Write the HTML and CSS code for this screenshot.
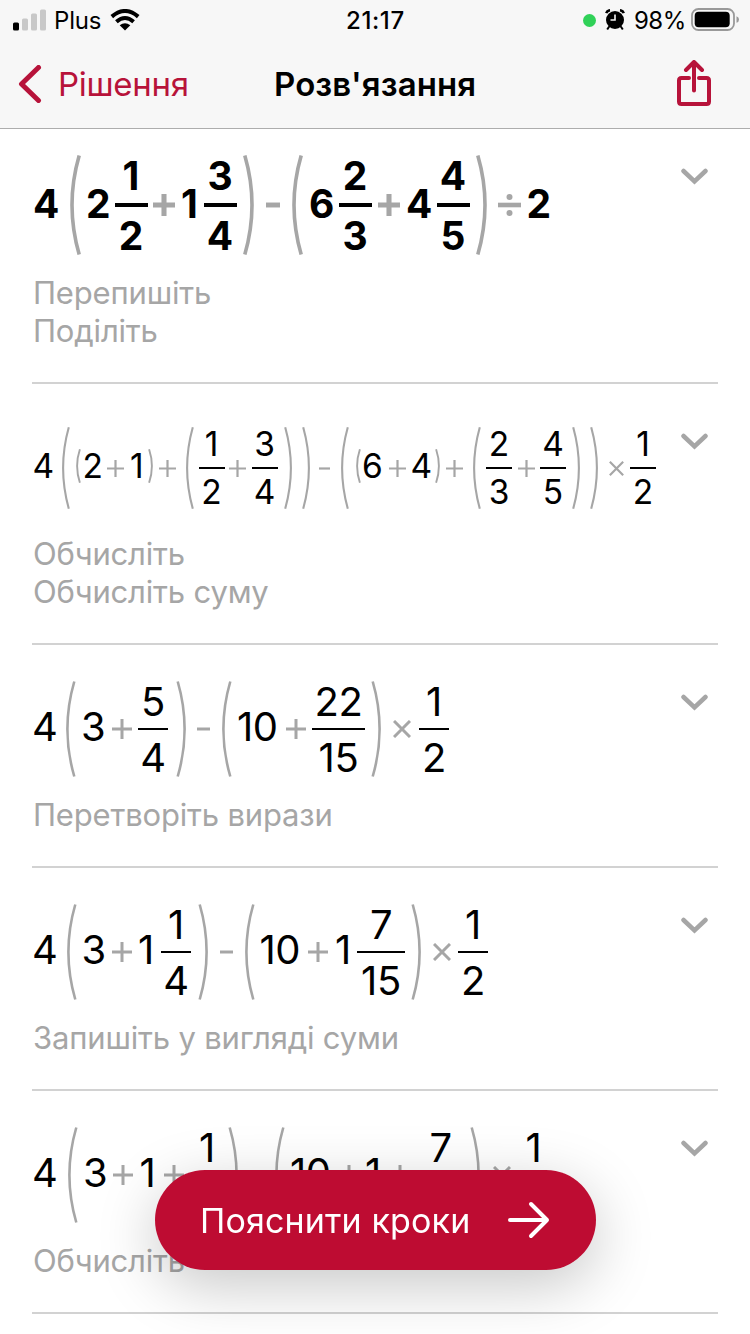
FILE: index.html
```html
<!DOCTYPE html>
<html lang="uk">
<head>
<meta charset="utf-8">
<title>Розв'язання</title>
<link rel="stylesheet" href="styles.css">
</head>
<body>
<svg class="defs" width="0" height="0">
  <symbol id="p-bold" viewBox="0 0 11 100"><path d="M9.2 .5Q-5.2 50 9.2 99.500" stroke-width="3.6"/></symbol>
  <symbol id="p-mid" viewBox="0 0 10 96"><path d="M8.300 .5Q-5.500 48 8.300 95.500" stroke-width="2.600"/></symbol>
  <symbol id="p-small" viewBox="0 0 8 82"><path d="M6.800 .3Q-4.600 41 6.800 81.700" stroke-width="2.100"/></symbol>
  <symbol id="p-tiny" viewBox="0 0 5 34"><path d="M3.900 .3Q-1.700 17 3.900 33.700" stroke-width="1.900"/></symbol>
  <symbol id="plus" viewBox="0 0 20 20"><path d="M0 10H20M10 0V20"/></symbol>
  <symbol id="minus" viewBox="0 0 13 20"><path d="M0 10H13"/></symbol>
  <symbol id="times" viewBox="0 0 18 18"><path d="M1 1L17 17M17 1L1 17"/></symbol>
  <symbol id="divide" viewBox="0 0 23 22"><path d="M0 11H23"/><circle cx="11.500" cy="3" r="3" fill="#a6a6a6" stroke="none"/><circle cx="11.500" cy="19" r="3" fill="#a6a6a6" stroke="none"/></symbol>
  <symbol id="chevron" viewBox="0 0 28 18"><path d="M3.500 4L14.500 14.500L25.500 4"/></symbol>
</svg>

<header class="header">
  <div class="status">
    <div class="status-left">
      <svg width="34" height="22" viewBox="0 0 34 22"><rect x="0" y="13.500" width="6" height="8" rx="1.500"/><g fill="#c8c8c8"><rect x="9" y="9.500" width="6" height="12" rx="1.500"/><rect x="18" y="4.500" width="6" height="17" rx="1.500"/><rect x="27" y=".5" width="6" height="21" rx="1.500"/></g></svg>
      <span class="carrier">Plus</span>
      <svg class="wifi" width="30" height="22" viewBox="0 0 30 22"><g fill="none" stroke="#000" stroke-width="4"><path d="M1.800 7.600Q15-3.600 28.200 7.600"/><path d="M6.400 12.700Q15 5.300 23.600 12.700"/></g><path d="M15 21.500L9.700 16.300Q15 12 20.300 16.300Z"/></svg>
    </div>
    <span class="time">21:17</span>
    <div class="status-right">
      <span class="dot"></span>
      <svg class="alarm" width="20" height="22" viewBox="0 0 20 22"><circle cx="10" cy="11" r="9"/><path d="M1.200 4.200Q2 1.600 5 1.200M18.800 4.200Q18 1.600 15 1.200" fill="none" stroke="#000" stroke-width="2.600"/><path d="M4.200 17.500L2.200 20.500M15.800 17.500L17.800 20.500" stroke="#000" stroke-width="2"/><path d="M10 5.500V11H5.500" fill="none" stroke="#f7f7f7" stroke-width="1.600"/></svg>
      <span class="percent">98%</span>
      <svg class="battery" width="48" height="24" viewBox="0 0 48 24"><rect x="1" y="1" width="42" height="21" rx="6.500" fill="none" stroke="#999" stroke-width="1.800"/><rect x="3.700" y="3.700" width="35" height="15.600" rx="4"/><path d="M45.500 8.200Q48 9 48 11.500T45.500 14.800Z" fill="#999"/></svg>
    </div>
  </div>
  <nav class="nav">
    <a class="back"><svg width="24" height="38" viewBox="0 0 24 38"><path d="M20.500 2.500L3.500 19L20.500 35.500"/></svg><span>Рішення</span></a>
    <h1 class="title">Розв'язання</h1>
    <svg class="share" width="34" height="48" viewBox="0 0 34 48"><path d="M12 18H4.500Q2 18 2 20.500V41.500Q2 44 4.500 44H29.500Q32 44 32 41.500V20.500Q32 18 29.500 18H22"/><path d="M17 30.500V2.500M9 10L17 2L25 10"/></svg>
  </nav>
</header>

<main>
  <section class="step step-first">
    <div class="expr e1">
      <b>4</b><svg class="p"><use href="#p-bold"/></svg><b>2</b><span class="frac"><i>1</i><i>2</i></span><svg class="plus"><use href="#plus"/></svg><b>1</b><span class="frac"><i>3</i><i>4</i></span><svg class="p r"><use href="#p-bold"/></svg><svg class="minus"><use href="#minus"/></svg><svg class="p"><use href="#p-bold"/></svg><b>6</b><span class="frac"><i>2</i><i>3</i></span><svg class="plus"><use href="#plus"/></svg><b>4</b><span class="frac"><i>4</i><i>5</i></span><svg class="p r"><use href="#p-bold"/></svg><svg class="divide"><use href="#divide"/></svg><b>2</b>
    </div>
    <p class="label">Перепишіть<br>Поділіть</p>
    <svg class="chevron"><use href="#chevron"/></svg>
  </section>

  <section class="step step-two-line">
    <div class="expr e2">
      <b>4</b><svg class="p"><use href="#p-small"/></svg><svg class="p tiny"><use href="#p-tiny"/></svg><b>2</b><svg class="plus"><use href="#plus"/></svg><b>1</b><svg class="p tiny r"><use href="#p-tiny"/></svg><svg class="plus"><use href="#plus"/></svg><svg class="p"><use href="#p-small"/></svg><span class="frac"><i>1</i><i>2</i></span><svg class="plus"><use href="#plus"/></svg><span class="frac"><i>3</i><i>4</i></span><svg class="p r"><use href="#p-small"/></svg><svg class="p r"><use href="#p-small"/></svg><svg class="minus"><use href="#minus"/></svg><svg class="p"><use href="#p-small"/></svg><svg class="p tiny"><use href="#p-tiny"/></svg><b>6</b><svg class="plus"><use href="#plus"/></svg><b>4</b><svg class="p tiny r"><use href="#p-tiny"/></svg><svg class="plus"><use href="#plus"/></svg><svg class="p"><use href="#p-small"/></svg><span class="frac"><i>2</i><i>3</i></span><svg class="plus"><use href="#plus"/></svg><span class="frac"><i>4</i><i>5</i></span><svg class="p r"><use href="#p-small"/></svg><svg class="p r"><use href="#p-small"/></svg><svg class="times"><use href="#times"/></svg><span class="frac"><i>1</i><i>2</i></span>
    </div>
    <p class="label">Обчисліть<br>Обчисліть суму</p>
    <svg class="chevron"><use href="#chevron"/></svg>
  </section>

  <section class="step">
    <div class="expr e3">
      <b>4</b><svg class="p"><use href="#p-mid"/></svg><b>3</b><svg class="plus"><use href="#plus"/></svg><span class="frac"><i>5</i><i>4</i></span><svg class="p r"><use href="#p-mid"/></svg><svg class="minus"><use href="#minus"/></svg><svg class="p"><use href="#p-mid"/></svg><b>10</b><svg class="plus"><use href="#plus"/></svg><span class="frac"><i>22</i><i>15</i></span><svg class="p r"><use href="#p-mid"/></svg><svg class="times"><use href="#times"/></svg><span class="frac"><i>1</i><i>2</i></span>
    </div>
    <p class="label">Перетворіть вирази</p>
    <svg class="chevron"><use href="#chevron"/></svg>
  </section>

  <section class="step">
    <div class="expr e4">
      <b>4</b><svg class="p"><use href="#p-mid"/></svg><b>3</b><svg class="plus"><use href="#plus"/></svg><b>1</b><span class="frac"><i>1</i><i>4</i></span><svg class="p r"><use href="#p-mid"/></svg><svg class="minus"><use href="#minus"/></svg><svg class="p"><use href="#p-mid"/></svg><b>10</b><svg class="plus"><use href="#plus"/></svg><b>1</b><span class="frac"><i>7</i><i>15</i></span><svg class="p r"><use href="#p-mid"/></svg><svg class="times"><use href="#times"/></svg><span class="frac"><i>1</i><i>2</i></span>
    </div>
    <p class="label">Запишіть у вигляді суми</p>
    <svg class="chevron"><use href="#chevron"/></svg>
  </section>

  <section class="step">
    <div class="expr e5">
      <b>4</b><svg class="p"><use href="#p-mid"/></svg><b>3</b><svg class="plus"><use href="#plus"/></svg><b>1</b><svg class="plus"><use href="#plus"/></svg><span class="frac"><i>1</i><i></i></span><svg class="p r"><use href="#p-mid"/></svg><svg class="minus"><use href="#minus"/></svg><svg class="p"><use href="#p-mid"/></svg><b>10</b><svg class="plus"><use href="#plus"/></svg><b>1</b><svg class="plus"><use href="#plus"/></svg><span class="frac"><i>7</i><i></i></span><svg class="p r"><use href="#p-mid"/></svg><svg class="times"><use href="#times"/></svg><span class="frac"><i>1</i><i></i></span>
    </div>
    <p class="label">Обчисліть</p>
    <svg class="chevron"><use href="#chevron"/></svg>
  </section>
</main>

<button class="explain"><span>Пояснити кроки</span><svg width="42" height="38" viewBox="0 0 42 38"><path d="M2 19H39M23 3L39 19L23 35"/></svg></button>
</body>
</html>
```
FILE: styles.css
```css
* { box-sizing: border-box; }
body {
  margin: 0;
  width: 750px;
  height: 1334px;
  overflow: hidden;
  background: #fff;
  color: #000;
  font-family: Inter, "Liberation Sans", sans-serif;
}
.defs { position: absolute; }
svg { display: block; }

/* Header */
.header {
  height: 129px;
  background: #f7f7f7;
  border-bottom: 1px solid #adadad;
}
.status {
  display: grid;
  grid-template-columns: 333px auto 1fr;
  align-items: center;
  height: 41px;
  padding: 0 11px 0 13px;
  font-size: 24px;
  line-height: 41px;
}
.status-left, .status-right { display: flex; align-items: center; }
.status-left svg, .status-right svg { margin-bottom: 1px; }
.status-right { justify-content: flex-end; }
.carrier { margin-left: 7px; width: 56px; letter-spacing: -0.2px; }
.time { font-weight: 500; letter-spacing: 0.6px; }
.dot { width: 13px; height: 13px; border-radius: 50%; background: #30d158; margin-right: 9px; }
.percent { margin: 0 5px 0 9px; letter-spacing: -0.4px; }
.nav {
  display: grid;
  grid-template-columns: 256px auto 1fr;
  align-items: center;
  height: 85px;
  padding: 0 39px 0 18px;
  font-size: 33px;
}
.back { display: flex; align-items: center; gap: 16px; color: #b7133a; }
.back span { letter-spacing: -0.3px; }
.back path, .share path {
  fill: none;
  stroke: #b7133a;
  stroke-width: 5;
  stroke-linecap: round;
  stroke-linejoin: round;
}
.share path { stroke-width: 4; }
.title { margin: 0; font-size: 33px; font-weight: 600; letter-spacing: 0.1px; }
.share { justify-self: end; }

/* Solution steps */
.step {
  display: grid;
  grid-template-columns: 1fr 28px;
  grid-template-rows: 116px auto;
  align-content: start;
  row-gap: 9px;
  margin: 0 32px;
  height: 223px;
  padding-top: 26px;
  border-bottom: 2px solid #d2d2d2;
}
.step-first { height: 255px; padding-top: 18px; row-gap: 11px; }
.step-two-line { height: 261px; }
.step .label { grid-column: 1; grid-row: 2; }
.step .chevron { grid-column: 2; grid-row: 1; width: 28px; height: 18px; margin: 22px 0 0 -10px; }
.step-first .chevron { margin-top: 20px; }
.chevron { fill: none; stroke: #a6a6a6; stroke-width: 4.5; stroke-linecap: round; stroke-linejoin: miter; }
.label {
  margin: 0;
  padding-left: 1px;
  color: #a6a6a6;
  font-size: 31px;
  line-height: 38px;
  letter-spacing: -0.18px;
  white-space: nowrap;
}

/* Expressions: each column starts at a token and includes the space after it */
.expr {
  --paren-w: 10px; --paren-h: 96px;
  --plus: 20px; --minus: 13px; --times: 18px;
  --line: 3px; --bar: 2px; --half: 54px; --bearing: -2px;
  display: grid;
  align-items: center;
  width: 640px;
  height: 116px;
  padding-left: 2px;
  font-size: 40px;
  line-height: 1;
  white-space: nowrap;
}
.expr svg { fill: none; stroke: #a6a6a6; stroke-width: var(--line); overflow: visible; }
.expr .p { width: var(--paren-w); height: var(--paren-h); stroke-width: inherit; }
.expr .r { transform: scaleX(-1); }
.expr .tiny { width: 5px; height: 34px; margin-bottom: 4px; }
.expr .plus { width: var(--plus); height: var(--plus); }
.expr .minus { width: var(--minus); height: var(--plus); }
.expr .times { width: var(--times); height: var(--times); }
.expr .divide { width: 23px; height: 22px; }
.expr b { font-weight: inherit; margin: 0 0 4px var(--bearing); }
.frac {
  display: grid;
  grid-template-rows: var(--half) var(--half);
  row-gap: var(--bar);
  width: 30px;
  background: linear-gradient(#000, #000) center / 100% var(--bar) no-repeat;
}
.frac i { font-style: normal; display: grid; place-items: center; min-width: 0; padding-top: 2px; }

.e1 {
  --paren-w: 11px; --paren-h: 100px; --plus: 22px; --minus: 14px;
  --line: 4.6px; --bar: 4px; --half: 56px; --bearing: -1px;
  font-size: 39px;
  font-weight: 700;
  grid-template-columns: 35.5px 17.500px 28px 37.500px 29.500px 22px 39px 23px 26px 18px 29px 39px 29px 30px 39px 22px 29.500px 25px;
}
.e1 .frac { width: 33px; }
.e1 .frac i { padding: 0 1px 0 0; }
.e2 {
  --paren-w: 8px; --paren-h: 82px; --plus: 17px; --minus: 11px; --times: 15px;
  --line: 2.6px; --half: 46px; --bearing: -1.5px;
  font-size: 33.5px;
  grid-template-columns: 28px 14px 8px 23px 24.500px 16px 11px 27px 13px 30.500px 22.500px 32px 18px 17.500px 21.500px 15px 8px 25px 23.500px 22.500px 11.500px 27px 13px 31.500px 22.500px 32px 18px 19px 21px 26px;
}
.e2 b { margin-bottom: 2px; }
.e2 .frac { width: 26px; }
.e3 { grid-template-columns: 32px 17px 29px 26px 38px 21px 25px 17px 46.500px 26.500px 58.500px 22.500px 26px 30px; }
.e3 .frac:nth-child(11) { width: 53px; }
.e4 { grid-template-columns: 32.500px 17px 28.500px 28px 21px 37px 22px 24.500px 17px 46.500px 29px 20px 53.500px 22.500px 25px 30px; }
.e4 .frac:nth-child(13) { width: 48px; }
.e5 { grid-template-columns: 34px 17px 28px 28.500px 22.500px 28px 36px 22px 25px 17px 47px 28px 22.500px 27px 53.500px 22.500px 26px 30px; }
.e5 .frac:nth-child(15) { width: 48px; }
.e3 i, .e4 i, .e5 i, .e3 b, .e4 b, .e5 b { letter-spacing: -0.4px; }

/* Floating action */
.explain {
  position: fixed;
  left: 155px;
  top: 1170px;
  width: 441px;
  height: 100px;
  display: flex;
  align-items: center;
  justify-content: space-between;
  padding: 0 46px 0 45px;
  border: 0;
  border-radius: 50px;
  background: #be0c32;
  box-shadow: 0 16px 60px rgba(0, 0, 0, .22);
  color: #fff;
  font: 400 34px Inter, "Liberation Sans", sans-serif;
  letter-spacing: 0.15px;
  white-space: nowrap;
}
.explain path { fill: none; stroke: #fff; stroke-width: 4; stroke-linecap: round; stroke-linejoin: round; }
```
